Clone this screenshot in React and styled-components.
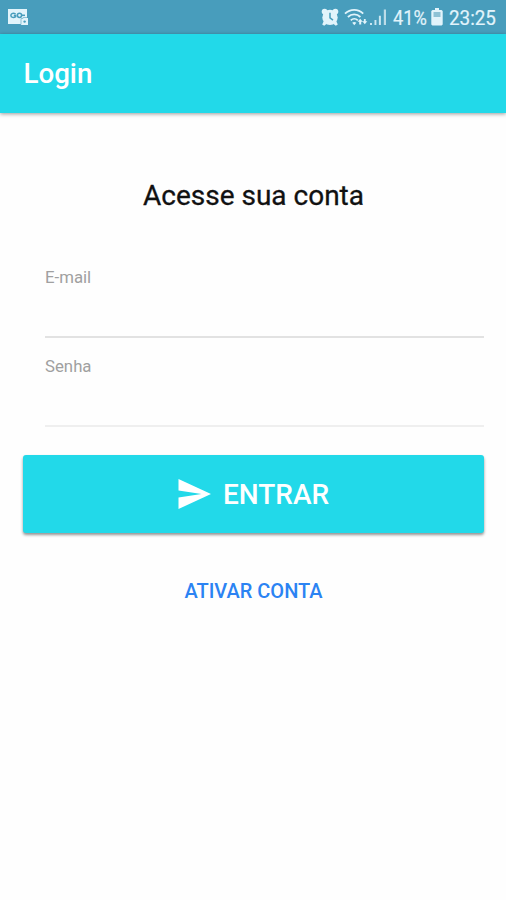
import React from 'react';
import styled, { createGlobalStyle } from 'styled-components';

const GlobalStyle = createGlobalStyle`
  * { box-sizing: border-box; }
  body { margin: 0; background: #fefefe; font-family: Roboto, sans-serif; }
`;

const Screen = styled.div`
  display: flex;
  flex-direction: column;
  height: 900px;
  width: 506px;
  overflow: hidden;
`;

const StatusBar = styled.header`
  display: flex;
  align-items: center;
  justify-content: space-between;
  flex: none;
  height: 34px;
  padding: 0 10px 0 7px;
  background: #489dbc;
  color: #e2f4fb;
`;

const StatusGroup = styled.div`
  display: flex;
  align-items: center;
  height: 34px;
`;

const StatusText = styled.span`
  width: ${(p) => p.$width}px;
  margin-left: ${(p) => p.$gap}px;
  font-size: 20.5px;
  line-height: 34px;
  white-space: nowrap;
  transform: translateY(1px) scaleX(${(p) => p.$scale});
  transform-origin: left center;
  -webkit-text-stroke: 0.2px #e2f4fb;
`;

const StatusIcon = styled.svg`
  display: block;
  flex: none;
  margin-left: ${(p) => p.$gap || 0}px;
`;

const AppBar = styled.div`
  display: flex;
  align-items: center;
  flex: none;
  height: 79px;
  padding: 0 23.5px;
  background: #22d9e9;
  box-shadow: 0 1px 4px rgba(0, 0, 0, 0.4);
`;

const AppTitle = styled.h1`
  margin: 0;
  color: #fff;
  font-size: 27.7px;
  font-weight: 500;
  line-height: 36px;
`;

const Content = styled.main`
  display: flex;
  flex-direction: column;
  padding: 64px 22px 0 23px;
`;

const Heading = styled.h2`
  margin: 0;
  height: 38px;
  color: #111;
  font-size: 28px;
  font-weight: 400;
  line-height: 38px;
  text-align: center;
  -webkit-text-stroke: 0.3px #111;
`;

const Form = styled.form`
  display: flex;
  flex-direction: column;
  margin-top: 34px;
`;

const Field = styled.label`
  display: flex;
  flex-direction: column;
  height: 89px;
  margin-left: 22px;
  padding-top: 17px;
  border-bottom: 2px solid ${(p) => p.$line};
`;

const FieldLabel = styled.span`
  color: #a0a0a0;
  font-size: 16.8px;
  line-height: 22px;
`;

const FieldInput = styled.input`
  height: 44px;
  padding: 0;
  border: 0;
  outline: 0;
  background: transparent;
  font: 22px Roboto, sans-serif;
`;

const SubmitButton = styled.button`
  display: flex;
  align-items: center;
  justify-content: center;
  gap: 12px;
  height: 78px;
  margin-top: 28px;
  padding: 0 0 1px;
  border: 0;
  border-radius: 3px;
  background: #22d9e9;
  box-shadow: 0 2px 3px rgba(0, 0, 0, 0.42);
  color: #fff;
  font: 500 28px/36px Roboto, sans-serif;
`;

const SubmitLabel = styled.span`
  padding-top: 2px;
`;

const LinkButton = styled.button`
  align-self: center;
  margin-top: 44px;
  padding: 0;
  border: 0;
  background: transparent;
  color: #2b83f3;
  font: 500 20px/28px Roboto, sans-serif;
`;

const KeyNotice = () => (
  <StatusIcon width="22" height="20" viewBox="0 0 22 20">
    <path d="M1 2h19v9h1v7h-7v-1H1z" fill="#e2f4fb" />
    <g fill="none" stroke="#489dbc" strokeWidth="1.5">
      <path d="M8.7 6.9c-3.4-1.3-4.8 0-4.8 1.5 0 2.1 3 2.7 4.8 1.3V8.4H6.8" />
      <circle cx="12.5" cy="8.3" r="2.1" />
      <path d="M14.5 8.3H18" />
    </g>
    <path d="M14 17.5v-6h2V10.5h4" fill="none" stroke="#8ec2d5" strokeWidth="1" />
    <circle cx="17.6" cy="14.6" r="1.2" fill="#489dbc" />
  </StatusIcon>
);

const Alarm = () => (
  <StatusIcon width="18" height="20" viewBox="0 0 18 20">
    <g fill="#e2f4fb">
      <circle cx="9" cy="10.4" r="7.7" />
      <circle cx="3.6" cy="4.6" r="2.9" />
      <circle cx="14.4" cy="4.6" r="2.9" />
      <path d="M2.8 14l3 2.8-2.6 2-2-1.4zM15.2 14l-3 2.8 2.6 2 2-1.4z" />
    </g>
    <path d="M9 5.8v5l3 2.3" fill="none" stroke="#489dbc" strokeWidth="1.5" />
  </StatusIcon>
);

const Wifi = () => (
  <StatusIcon $gap={5} width="24" height="20" viewBox="0 0 24 20">
    <g fill="none" stroke="#e2f4fb" strokeWidth="1.8">
      <path d="M1 6.7c5.3-5.1 13.2-5.1 18.2 0M3.9 10c3.6-3.4 9-3.4 12.5 0M6.8 13.3c2-1.9 5-1.9 7 0" />
    </g>
    <path d="M8.2 15.8c1.2-1 2.9-1 4.1 0l-2 2.4z" fill="#e2f4fb" />
    <path d="M16.2 11.7l2.6 3h-1.6v2.8h-2v-2.8h-1.6zM20.8 17.2l-2.5-3h1.6V12h1.8v2.2h1.6z" fill="#e2f4fb" />
  </StatusIcon>
);

const Signal = () => (
  <StatusIcon $gap={2} width="17" height="20" viewBox="0 0 17 20">
    <path d="M0 16h2v2H0zM4.5 13h1.9v5H4.5zM8.9 8.8h2V18h-2z" fill="#cae7f2" />
    <path d="M13.8 2.5H16V18h-2.2z" fill="#bcdce8" />
  </StatusIcon>
);

const Battery = () => (
  <StatusIcon $gap={2} width="12" height="20" viewBox="0 0 12 20">
    <path d="M4 1h4v2h2.5L11.7 4v13.4L10.6 18.4H1.4l-1.1-1V4l1.2-1H4z" fill="#e2f4fb" />
    <path d="M2.5 5h7v5h-7z" fill="#8ec2d5" />
  </StatusIcon>
);

const Send = () => (
  <svg width="33" height="30" viewBox="0 0 33 30" fill="#fff">
    <path d="M.5 0L33 15 .5 30V18.4L23.5 15 .5 11.6z" />
  </svg>
);

export default function App() {
  return (
    <Screen>
      <GlobalStyle />
      <StatusBar>
        <KeyNotice />
        <StatusGroup>
          <Alarm />
          <Wifi />
          <Signal />
          <StatusText $width={36} $gap={6} $scale={0.89}>41%</StatusText>
          <Battery />
          <StatusText $width={47} $gap={6} $scale={0.92}>23:25</StatusText>
        </StatusGroup>
      </StatusBar>
      <AppBar>
        <AppTitle>Login</AppTitle>
      </AppBar>
      <Content>
        <Heading>Acesse sua conta</Heading>
        <Form onSubmit={(e) => e.preventDefault()}>
          <Field $line="#e2e2e2">
            <FieldLabel>E-mail</FieldLabel>
            <FieldInput type="email" />
          </Field>
          <Field $line="#efefef">
            <FieldLabel>Senha</FieldLabel>
            <FieldInput type="password" />
          </Field>
          <SubmitButton type="submit">
            <Send />
            <SubmitLabel>ENTRAR</SubmitLabel>
          </SubmitButton>
        </Form>
        <LinkButton type="button">ATIVAR CONTA</LinkButton>
      </Content>
    </Screen>
  );
}
